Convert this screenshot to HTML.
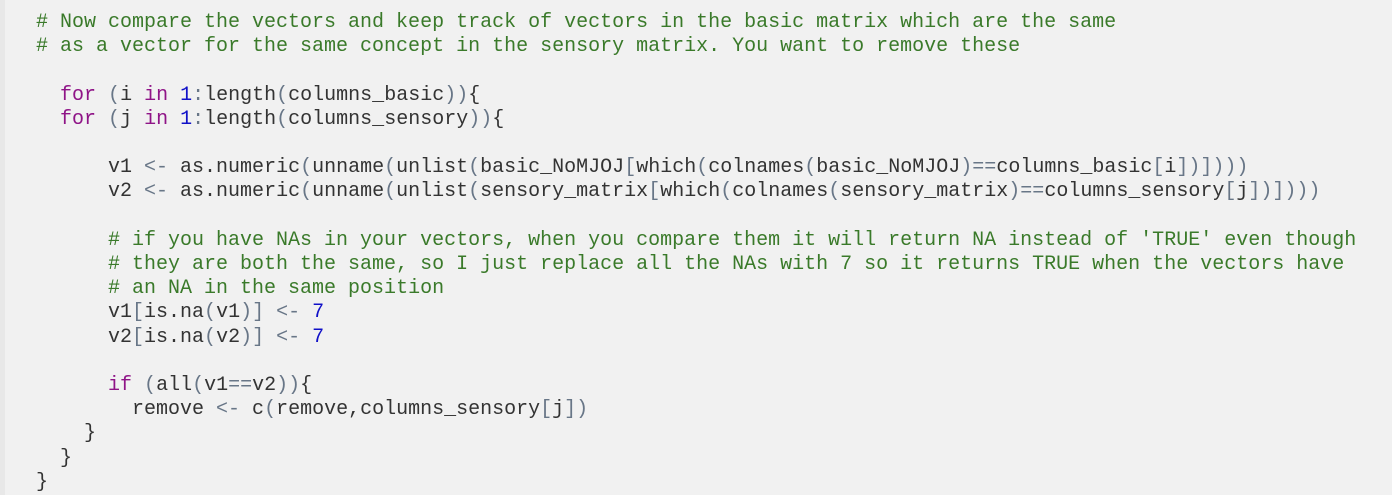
<!DOCTYPE html>
<html><head><style>
html,body{margin:0;padding:0;background:#f1f1f1;width:1392px;height:495px;overflow:hidden}
.l{position:absolute;left:0;top:0;width:5px;height:495px;background:#e8e8e8}
pre{margin:0;position:absolute;left:36px;top:11px;font-family:"Liberation Mono",monospace;font-size:20px;line-height:24.2px;color:#333}
.c{color:#3a7a2a}.k{color:#8f1487}.n{color:#1010c8}.o{color:#687687}.s{color:#2a7a2a}
</style></head><body><div class="l"></div>
<pre><span class="c"># Now compare the vectors and keep track of vectors in the basic matrix which are the same</span>
<span class="c"># as a vector for the same concept in the sensory matrix. You want to remove these</span>

  <span class="k">for</span> <span class="o">(</span>i <span class="k">in</span> <span class="n">1</span><span class="o">:</span>length<span class="o">(</span>columns_basic<span class="o">))</span>{
  <span class="k">for</span> <span class="o">(</span>j <span class="k">in</span> <span class="n">1</span><span class="o">:</span>length<span class="o">(</span>columns_sensory<span class="o">))</span>{

      v1 <span class="o">&lt;-</span> as.numeric<span class="o">(</span>unname<span class="o">(</span>unlist<span class="o">(</span>basic_NoMJOJ<span class="o">[</span>which<span class="o">(</span>colnames<span class="o">(</span>basic_NoMJOJ<span class="o">)==</span>columns_basic<span class="o">[</span>i<span class="o">])])))</span>
      v2 <span class="o">&lt;-</span> as.numeric<span class="o">(</span>unname<span class="o">(</span>unlist<span class="o">(</span>sensory_matrix<span class="o">[</span>which<span class="o">(</span>colnames<span class="o">(</span>sensory_matrix<span class="o">)==</span>columns_sensory<span class="o">[</span>j<span class="o">])])))</span>

      <span class="c"># if you have NAs in your vectors, when you compare them it will return NA instead of 'TRUE' even though</span>
      <span class="c"># they are both the same, so I just replace all the NAs with 7 so it returns TRUE when the vectors have</span>
      <span class="c"># an NA in the same position</span>
      v1<span class="o">[</span>is.na<span class="o">(</span>v1<span class="o">)]</span> <span class="o">&lt;-</span> <span class="n">7</span>
      v2<span class="o">[</span>is.na<span class="o">(</span>v2<span class="o">)]</span> <span class="o">&lt;-</span> <span class="n">7</span>

      <span class="k">if</span> <span class="o">(</span>all<span class="o">(</span>v1<span class="o">==</span>v2<span class="o">))</span>{
        remove <span class="o">&lt;-</span> c<span class="o">(</span>remove,columns_sensory<span class="o">[</span>j<span class="o">])</span>
    }
  }
}</pre>
</body></html>
